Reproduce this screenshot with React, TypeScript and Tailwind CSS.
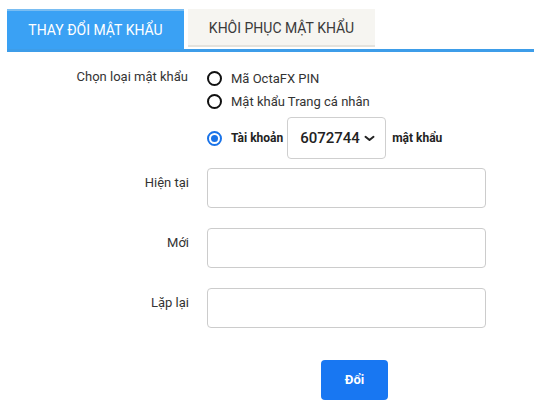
import React from "react";

function Radio({ checked }: { checked?: boolean }) {
  if (checked) {
    return (
      <span className="flex h-[15px] w-[15px] items-center justify-center rounded-full border-2 border-[#1a73e8] bg-white">
        <span className="h-[7px] w-[7px] rounded-full bg-[#1a73e8]" />
      </span>
    );
  }
  return <span className="block h-[15px] w-[15px] rounded-full border-2 border-[#111] bg-white" />;
}

export default function App() {
  return (
    <div className="w-[534px] h-[407px] bg-white text-[#333] overflow-hidden" style={{ fontFamily: "Roboto, 'Noto Sans', sans-serif" }}>
      {/* Tabs */}
      <div className="pt-[9px] pl-[7px]">
        <div className="flex items-start border-b-[3px] border-[#3d9de9]">
          <div className="h-[40px] w-[177px] border-t-2 border-[#79bdf2] bg-[#3aa1f4] text-white text-[14px] flex items-center justify-center pt-[1px]">
            THAY ĐỔI MẬT KHẨU
          </div>
          <div className="ml-[4px] h-[38px] w-[187px] border-b-2 border-[#e4e2dc] bg-[#f6f5f1] text-[#3a3a3a] text-[14px] flex items-center justify-center pt-[3px]">
            KHÔI PHỤC MẬT KHẨU
          </div>
        </div>
      </div>

      {/* Form */}
      <div className="mt-[15px] flex flex-col">
        <div className="flex">
          <div className="w-[188px] text-right text-[13px] leading-[20px]">Chọn loại mật khẩu</div>
          <div className="ml-[19px] flex flex-col">
            <label className="flex h-[23px] items-center gap-[9px] text-[13px]">
              <Radio />
              <span>Mã OctaFX PIN</span>
            </label>
            <label className="flex h-[23px] items-center gap-[9px] text-[13px]">
              <Radio />
              <span>Mật khẩu Trang cá nhân</span>
            </label>
            <div className="mt-[4px] flex h-[42px] items-center text-[12px] font-bold text-[#222]">
              <Radio checked />
              <span className="ml-[9px]">Tài khoản</span>
              <div className="ml-[4px] flex h-[42px] w-[99px] items-center rounded-[4px] border border-[#cfcfcf] pl-[12px]">
                <span className="text-[15px] font-medium text-[#222]">6072744</span>
                <svg className="ml-[4px] mt-[1px]" width="11" height="7" viewBox="0 0 11 7">
                  <path d="M1.5 1.8 L5.5 5 L9.5 1.8" fill="none" stroke="#222" strokeWidth="2" strokeLinecap="round" strokeLinejoin="round" />
                </svg>
              </div>
              <span className="ml-[6px]">mật khẩu</span>
            </div>
          </div>
        </div>

        {["Hiện tại", "Mới", "Lặp lại"].map((l, i) => (
          <div key={l} className={`flex ${i === 0 ? "mt-[9px]" : "mt-[20px]"}`}>
            <div className="w-[189px] pt-[5px] text-right text-[13px] leading-[20px]">{l}</div>
            <div className="ml-[18px] h-[40px] w-[279px] rounded-[4px] border border-[#cccccc] bg-white" />
          </div>
        ))}

        <div className="mt-[32px] ml-[321px]">
          <button className="flex h-[40px] w-[67px] items-center justify-center rounded-[4px] bg-[#1877f2] text-[13px] font-bold text-white">
            Đổi
          </button>
        </div>
      </div>
    </div>
  );
}
